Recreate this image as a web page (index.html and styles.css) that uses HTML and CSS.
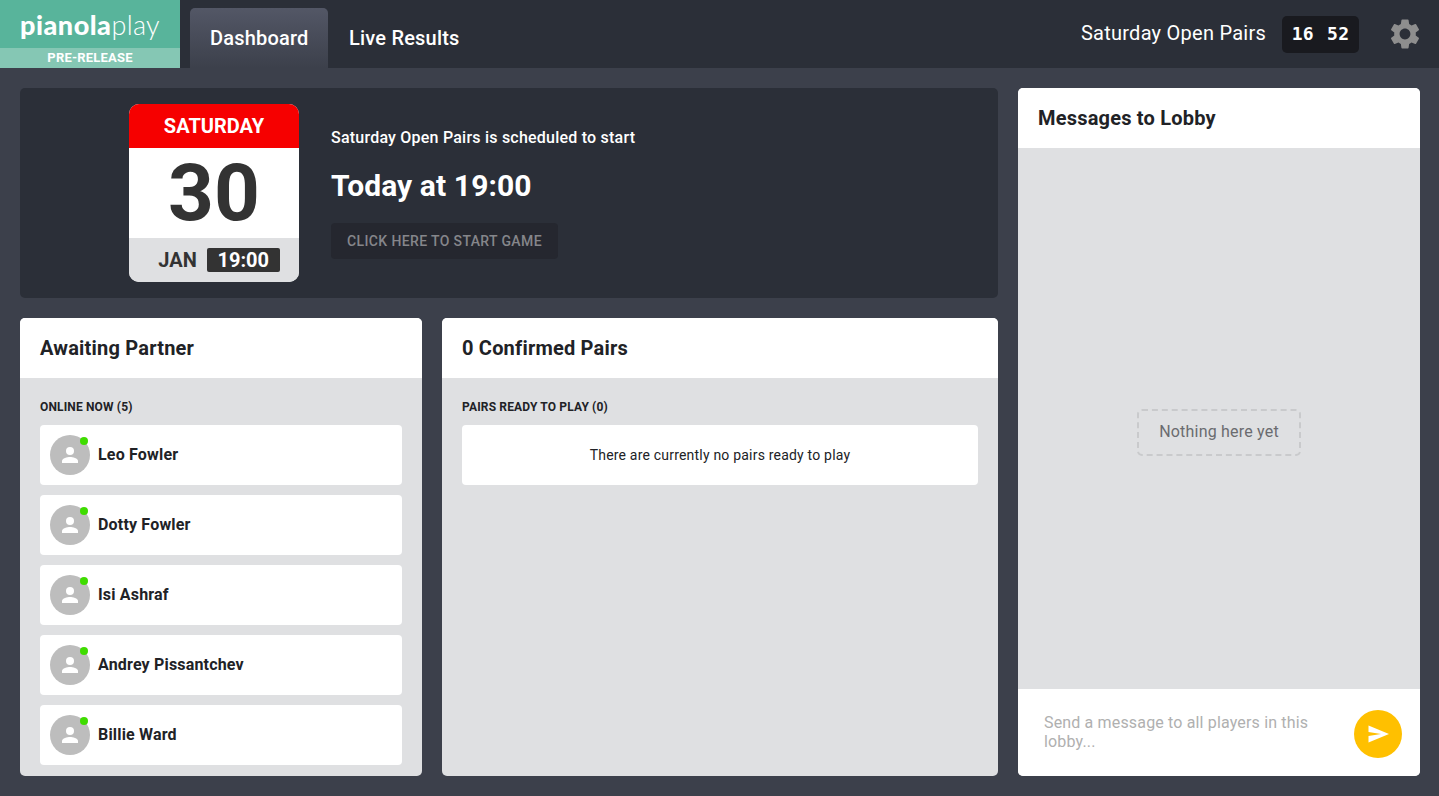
FILE: index.html
```html
<!DOCTYPE html>
<html lang="en">
<head>
<meta charset="utf-8">
<title>Pianola Play</title>
<link rel="stylesheet" href="styles.css">
</head>
<body>
<header class="topbar">
  <div class="brand">
    <div class="logo"><span class="logo-bold">pianola</span><span class="logo-light">play</span></div>
    <div class="release">PRE-RELEASE</div>
  </div>
  <nav class="tabs">
    <a class="tab tab-active">Dashboard</a>
    <a class="tab">Live Results</a>
  </nav>
  <div class="top-right">
    <span class="event-name">Saturday Open Pairs</span>
    <span class="timer"><span>16</span><span>52</span></span>
    <svg class="gear" viewBox="0 0 24 24" width="36" height="36"><path fill="#8e8e8e" d="M19.14 12.94c.04-.3.06-.61.06-.94 0-.32-.02-.64-.07-.94l2.03-1.58a.49.49 0 0 0 .12-.61l-1.92-3.32a.488.488 0 0 0-.59-.22l-2.39.96c-.5-.38-1.03-.7-1.62-.94l-.36-2.54a.484.484 0 0 0-.48-.41h-3.84c-.24 0-.43.17-.47.41l-.36 2.54c-.59.24-1.13.57-1.62.94l-2.39-.96c-.22-.08-.47 0-.59.22L2.74 8.87c-.12.21-.08.47.12.61l2.03 1.58c-.05.3-.09.63-.09.94s.02.64.07.94l-2.03 1.58a.49.49 0 0 0-.12.61l1.92 3.32c.12.22.37.29.59.22l2.39-.96c.5.38 1.03.7 1.62.94l.36 2.54c.05.24.24.41.48.41h3.84c.24 0 .44-.17.47-.41l.36-2.54c.59-.24 1.13-.56 1.62-.94l2.39.96c.22.08.47 0 .59-.22l1.92-3.32c.12-.22.07-.47-.12-.61l-2.01-1.58zM12 15.6c-1.98 0-3.6-1.62-3.6-3.6s1.62-3.6 3.6-3.6 3.6 1.62 3.6 3.6-1.62 3.6-3.6 3.6z"/></svg>
  </div>
</header>
<main class="page">
  <div class="left">
    <section class="banner">
      <div class="calendar">
        <div class="cal-day">SATURDAY</div>
        <div class="cal-date">30</div>
        <div class="cal-foot"><span class="cal-month">JAN</span><span class="cal-time">19:00</span></div>
      </div>
      <div class="banner-info">
        <p class="banner-lead">Saturday Open Pairs is scheduled to start</p>
        <p class="banner-when">Today at 19:00</p>
        <button class="start-btn">CLICK HERE TO START GAME</button>
      </div>
    </section>
    <div class="panels">
      <section class="card">
        <h2 class="card-title">Awaiting Partner</h2>
        <div class="card-body">
          <h3 class="list-label">ONLINE NOW (5)</h3>
          <div class="player"><span class="avatar"><svg viewBox="0 0 24 24" width="24" height="24"><circle cx="12" cy="8" r="4" fill="#fff"/><path fill="#fff" d="M4 20v-2c0-2.7 5.3-4 8-4s8 1.300 8 4v2z"/></svg><i class="dot"></i></span><span class="player-name">Leo Fowler</span></div>
          <div class="player"><span class="avatar"><svg viewBox="0 0 24 24" width="24" height="24"><circle cx="12" cy="8" r="4" fill="#fff"/><path fill="#fff" d="M4 20v-2c0-2.7 5.3-4 8-4s8 1.300 8 4v2z"/></svg><i class="dot"></i></span><span class="player-name">Dotty Fowler</span></div>
          <div class="player"><span class="avatar"><svg viewBox="0 0 24 24" width="24" height="24"><circle cx="12" cy="8" r="4" fill="#fff"/><path fill="#fff" d="M4 20v-2c0-2.7 5.3-4 8-4s8 1.300 8 4v2z"/></svg><i class="dot"></i></span><span class="player-name">Isi Ashraf</span></div>
          <div class="player"><span class="avatar"><svg viewBox="0 0 24 24" width="24" height="24"><circle cx="12" cy="8" r="4" fill="#fff"/><path fill="#fff" d="M4 20v-2c0-2.7 5.3-4 8-4s8 1.300 8 4v2z"/></svg><i class="dot"></i></span><span class="player-name">Andrey Pissantchev</span></div>
          <div class="player"><span class="avatar"><svg viewBox="0 0 24 24" width="24" height="24"><circle cx="12" cy="8" r="4" fill="#fff"/><path fill="#fff" d="M4 20v-2c0-2.7 5.3-4 8-4s8 1.300 8 4v2z"/></svg><i class="dot"></i></span><span class="player-name">Billie Ward</span></div>
        </div>
      </section>
      <section class="card card-wide">
        <h2 class="card-title">0 Confirmed Pairs</h2>
        <div class="card-body">
          <h3 class="list-label">PAIRS READY TO PLAY (0)</h3>
          <div class="empty-row">There are currently no pairs ready to play</div>
        </div>
      </section>
    </div>
  </div>
  <section class="card messages">
    <h2 class="card-title">Messages to Lobby</h2>
    <div class="messages-body"><span class="nothing">Nothing here yet</span></div>
    <div class="composer">
      <p class="composer-text">Send a message to all players in this lobby...</p>
      <span class="send"><svg viewBox="0 0 24 24" width="24" height="24"><path fill="#fff" d="M2.500 3.500 23 12 2.500 20.500v-6.600L15 12 2.500 10.100z"/></svg></span>
    </div>
  </section>
</main>
</body>
</html>
```
FILE: styles.css
```css
* { box-sizing: border-box; }
html, body { margin: 0; height: 100%; }
body {
  width: 1439px;
  height: 796px;
  overflow: hidden;
  background: #3c404b;
  font-family: Roboto, "Liberation Sans", sans-serif;
  color: #212226;
}
.topbar {
  display: flex;
  height: 68px;
  background: #2b2f38;
}
.brand { width: 180px; display: flex; flex-direction: column; }
.logo {
  height: 48px;
  background: #58b49b;
  color: #fff;
  font-family: Lato, sans-serif;
  font-size: 27px;
  line-height: 50px;
  text-align: center;
  letter-spacing: 0.3px;
}
.logo-bold { font-weight: 900; letter-spacing: 0.5px; }
.logo-light { font-weight: 300; }
.release {
  height: 20px;
  background: #85c7b4;
  color: #fff;
  font-size: 13px;
  font-weight: 700;
  line-height: 20px;
  text-align: center;
  letter-spacing: 0.2px;
}
.tabs { display: flex; margin-left: 10px; padding-top: 8px; }
.tab {
  display: block;
  padding: 0 20px;
  font-size: 20px;
  font-weight: 500;
  line-height: 60px;
  color: #fff;
  letter-spacing: 0.2px;
  border-radius: 5px 5px 0 0;
}
.tab-active {
  width: 138px;
  padding-right: 0;
  margin-right: 1px;
  white-space: nowrap;
  background: linear-gradient(#535766, #3c404b);
}
.top-right {
  margin-left: auto;
  display: flex;
  align-items: center;
  padding-right: 16px;
}
.event-name { font-size: 20px; color: #fff; margin-right: 16px; letter-spacing: 0.25px; padding-bottom: 2px; }
.timer {
  display: flex;
  justify-content: center;
  gap: 13px;
  width: 77px;
  height: 37px;
  background: #191a1f;
  border-radius: 5px;
  color: #fff;
  font-family: "DejaVu Sans Mono", monospace;
  font-size: 18px;
  font-weight: 700;
  line-height: 35px;
  letter-spacing: 0.3px;
  margin-right: 28px;
}
.gear { display: block; }
.page {
  display: flex;
  gap: 20px;
  padding: 20px 19px 20px 20px;
  height: 728px;
}
.left { width: 978px; display: flex; flex-direction: column; gap: 20px; }
.banner {
  display: flex;
  align-items: flex-start;
  height: 210px;
  padding: 16px 0 0 109px;
  background: #2b2f38;
  border-radius: 5px;
}
.calendar {
  width: 170px;
  height: 178px;
  border-radius: 10px;
  overflow: hidden;
  background: #fff;
  text-align: center;
  flex: none;
}
.cal-day {
  height: 44px;
  background: #f60000;
  color: #fff;
  font-size: 20px;
  font-weight: 700;
  line-height: 44px;
}
.cal-date {
  height: 90px;
  color: #333;
  font-size: 80px;
  font-weight: 700;
  line-height: 90px;
}
.cal-foot {
  height: 44px;
  background: #dfe0e2;
  display: flex;
  align-items: center;
  justify-content: center;
  gap: 10px;
  padding-left: 10px;
}
.cal-month { color: #333; font-size: 20px; font-weight: 700; }
.cal-time {
  width: 73px;
  height: 24px;
  background: #333;
  border-radius: 2px;
  color: #fff;
  font-size: 20px;
  font-weight: 700;
  line-height: 24px;
}
.banner-info { margin-left: 32px; padding-top: 24px; color: #fff; }
.banner-lead { margin: 0; font-size: 16px; font-weight: 500; line-height: 20px; letter-spacing: 0.22px; }
.banner-when { margin: 18px 0 0; font-size: 30px; font-weight: 700; line-height: 40px; letter-spacing: 0.1px; }
.start-btn {
  display: block;
  margin-top: 17px;
  width: 227px;
  height: 36px;
  padding: 0;
  border: 0;
  border-radius: 4px;
  background: #25272f;
  color: #85868b;
  font-family: inherit;
  font-size: 14px;
  font-weight: 500;
  letter-spacing: 0.37px;
}
.panels { display: flex; gap: 20px; height: 458px; }
.card {
  width: 402px;
  display: flex;
  flex-direction: column;
  border-radius: 5px;
  overflow: hidden;
  background: #dfe0e2;
}
.card-wide { width: 556px; }
.card-title {
  margin: 0;
  height: 60px;
  padding-left: 20px;
  background: #fff;
  font-size: 20px;
  font-weight: 700;
  line-height: 60px;
  color: #212226;
  letter-spacing: 0.2px;
}
.card-body { padding: 21px 20px 0; }
.list-label {
  margin: 0 0 9px;
  font-size: 12px;
  font-weight: 700;
  line-height: 17px;
  color: #212226;
  letter-spacing: 0.15px;
}
.player {
  display: flex;
  align-items: center;
  height: 60px;
  margin-bottom: 10px;
  padding-left: 10px;
  background: #fff;
  border-radius: 4px;
}
.avatar {
  position: relative;
  display: flex;
  align-items: center;
  justify-content: center;
  width: 40px;
  height: 40px;
  margin-right: 8px;
  border-radius: 50%;
  background: #bdbdbd;
}
.dot {
  position: absolute;
  top: 2px;
  right: 2px;
  width: 8px;
  height: 8px;
  border-radius: 50%;
  background: #3fdc00;
}
.player-name { font-size: 16px; font-weight: 700; line-height: 18px; padding-bottom: 1px; letter-spacing: 0.18px; }
.empty-row {
  height: 60px;
  background: #fff;
  border-radius: 4px;
  font-size: 14px;
  line-height: 60px;
  text-align: center;
  letter-spacing: 0.2px;
}
.messages { width: 402px; }
.messages-body {
  flex: 1;
  display: flex;
  align-items: center;
  justify-content: center;
  padding-top: 27px;
}
.nothing {
  width: 164px;
  height: 47px;
  border: 2px dashed #c9cacc;
  border-radius: 5px;
  color: #6a6b6f;
  font-size: 16px;
  line-height: 41px;
  text-align: center;
  letter-spacing: 0.2px;
}
.composer {
  display: flex;
  align-items: center;
  height: 87px;
  padding: 0 18px 0 26px;
  background: #fff;
}
.composer-text {
  margin: 0 0 1px;
  flex: 1;
  padding-right: 30px;
  color: #b0b0b0;
  font-size: 16px;
  line-height: 19px;
  letter-spacing: 0.16px;
}
.send {
  display: flex;
  align-items: center;
  justify-content: center;
  flex: none;
  width: 48px;
  height: 48px;
  margin-top: 2px;
  border-radius: 50%;
  background: #ffc000;
}
```
